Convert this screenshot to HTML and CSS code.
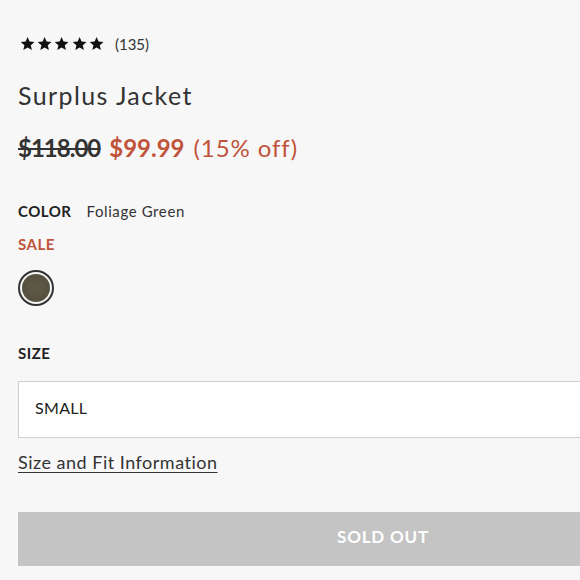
FILE: index.html
```html
<!DOCTYPE html>
<html>
<head>
<meta charset="utf-8">
<link rel="stylesheet" href="styles.css">
</head>
<body>
<div class="product">
  <div class="rating">
    <span class="stars">
      <svg viewBox="0 0 24 24" class="star"><path d="M12 1.5l3.1 7.2 7.8.7-5.9 5.2 1.8 7.7L12 18.2l-6.8 4.1 1.8-7.7L1.1 9.4l7.8-.7z"/></svg>
      <svg viewBox="0 0 24 24" class="star"><path d="M12 1.5l3.1 7.2 7.8.7-5.9 5.2 1.8 7.7L12 18.2l-6.8 4.1 1.8-7.7L1.1 9.4l7.8-.7z"/></svg>
      <svg viewBox="0 0 24 24" class="star"><path d="M12 1.5l3.1 7.2 7.8.7-5.9 5.2 1.8 7.7L12 18.2l-6.8 4.1 1.8-7.7L1.1 9.4l7.8-.7z"/></svg>
      <svg viewBox="0 0 24 24" class="star"><path d="M12 1.5l3.1 7.2 7.8.7-5.9 5.2 1.8 7.7L12 18.2l-6.8 4.1 1.8-7.7L1.1 9.4l7.8-.7z"/></svg>
      <svg viewBox="0 0 24 24" class="star"><path d="M12 1.5l3.1 7.2 7.8.7-5.9 5.2 1.8 7.7L12 18.2l-6.8 4.1 1.8-7.7L1.1 9.4l7.8-.7z"/></svg>
    </span>
    <span class="count">(135)</span>
  </div>
  <h1 class="title">Surplus Jacket</h1>
  <div class="price">
    <span class="was">$118.00</span>
    <span class="now">$99.99</span>
    <span class="off">(15% off)</span>
  </div>
  <div class="color-row">
    <span class="label">COLOR</span>
    <span class="color-name">Foliage Green</span>
  </div>
  <div class="sale">SALE</div>
  <div class="swatch"><span class="swatch-fill"></span></div>
  <div class="label size-label">SIZE</div>
  <div class="select">SMALL</div>
  <a class="fit" href="#">Size and Fit Information</a>
  <div class="sold">SOLD OUT</div>
</div>
</body>
</html>
```
FILE: styles.css
```css
html, body {
  margin: 0;
  padding: 0;
  background: #f7f7f7;
  overflow: hidden;
}
body {
  font-family: Lato, "Open Sans", sans-serif;
  color: #333;
}
.product {
  width: 730px;
  padding: 34px 0 0 18px;
  display: flex;
  flex-direction: column;
  align-items: flex-start;
}
.rating {
  display: flex;
  align-items: center;
  height: 20px;
  padding-left: 2px;
}
.stars {
  display: flex;
  gap: 2px;
}
.star {
  width: 15.2px;
  height: 15.2px;
  fill: #111;
}
.count {
  margin-left: 11px;
  font-size: 15px;
  color: #333;
}
.title {
  margin: 26px 0 0;
  font-size: 25px;
  font-weight: 400;
  letter-spacing: 1.4px;
  line-height: 30px;
  color: #333;
}
.price {
  margin-top: 23px;
  font-size: 24px;
  line-height: 30px;
  display: flex;
  gap: 9px;
}
.was {
  font-weight: 700;
  text-decoration: line-through;
  color: #333;
  letter-spacing: -1px;
}
.now {
  font-weight: 700;
  color: #c0533a;
}
.off {
  color: #c0533a;
  letter-spacing: 0.9px;
}
.color-row {
  margin-top: 39px;
  display: flex;
  gap: 15px;
  font-size: 15px;
  line-height: 18px;
}
.label {
  font-weight: 700;
  font-size: 15px;
  letter-spacing: 0.5px;
  color: #222;
}
.color-name {
  color: #333;
  letter-spacing: 0.6px;
}
.sale {
  margin-top: 15px;
  font-size: 15px;
  letter-spacing: 0.5px;
  line-height: 18px;
  font-weight: 700;
  color: #c0533a;
}
.swatch {
  margin-top: 17px;
  width: 28px;
  height: 28px;
  border: 2px solid #333;
  border-radius: 50%;
  padding: 2px;
  box-sizing: content-box;
  display: flex;
}
.swatch-fill {
  flex: 1;
  border-radius: 50%;
  background: radial-gradient(circle, #5f5a47 0%, #565040 70%, #4c4738 100%);
}
.size-label {
  margin-top: 38px;
  line-height: 18px;
}
.select {
  margin-top: 19px;
  box-sizing: border-box;
  width: 730px;
  height: 57px;
  background: #fff;
  border: 1px solid #cfcfcf;
  padding: 0 0 5px 16px;
  display: flex;
  align-items: center;
  font-size: 16px;
  letter-spacing: 0.3px;
  color: #222;
}
.fit {
  margin-top: 14px;
  font-size: 18px;
  letter-spacing: 0.5px;
  line-height: 20px;
  color: #333;
  text-decoration: underline;
  text-underline-offset: 3px;
}
.sold {
  margin-top: 40px;
  box-sizing: border-box;
  width: 730px;
  height: 54px;
  padding-bottom: 5px;
  background: #c4c4c4;
  color: #fff;
  font-weight: 700;
  font-size: 17px;
  display: flex;
  align-items: center;
  justify-content: center;
  letter-spacing: 0.8px;
}
```
